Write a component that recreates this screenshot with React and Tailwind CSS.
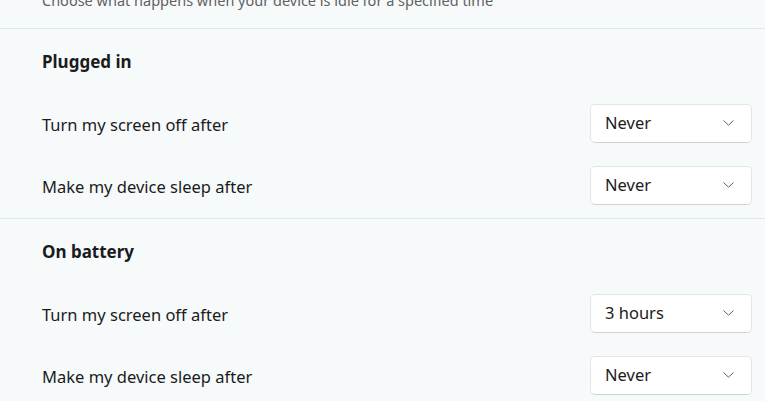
import React from 'react';

const Dropdown = ({ value }) => (
  <div className="mb-[4px] flex h-[39px] w-[162px] items-center justify-between rounded-[5px] border border-[#e3e5e7] border-b-[#cfd1d3] bg-white pl-[14px] pr-[17px] text-[16.5px] text-[#1b1b1b]">
    <span>{value}</span>
    <svg width="11" height="6" viewBox="0 0 11 6" fill="none">
      <path d="M0.5 0.5 L5.5 5.2 L10.5 0.5" stroke="#5f5f5f" strokeWidth="1" />
    </svg>
  </div>
);

const Row = ({ label, value }) => (
  <div className="flex h-[62px] items-center justify-between pl-[42px] pr-[13px]">
    <span className="text-[16.5px] text-[#1b1b1b]">{label}</span>
    <Dropdown value={value} />
  </div>
);

const Section = ({ title, rows }) => (
  <div className="border-t border-[#e1e8ea]">
    <div className="pl-[42px] pt-[16px] pb-[15px] text-[17px] leading-[34px] font-bold text-[#1b1b1b]">{title}</div>
    {rows.map((r) => (
      <Row key={r.label} label={r.label} value={r.value} />
    ))}
  </div>
);

export default function App() {
  return (
    <div className="h-[401px] w-[765px] overflow-hidden bg-[#f7fafb] font-['Noto_Sans',sans-serif]">
      <div className="h-[28px] overflow-hidden">
        <p className="-mt-[10px] pl-[42px] text-[14.5px] leading-[20px] text-[#616161]">
          Choose what happens when your device is idle for a specified time
        </p>
      </div>
      <Section
        title="Plugged in"
        rows={[
          { label: 'Turn my screen off after', value: 'Never' },
          { label: 'Make my device sleep after', value: 'Never' },
        ]}
      />
      <Section
        title="On battery"
        rows={[
          { label: 'Turn my screen off after', value: '3 hours' },
          { label: 'Make my device sleep after', value: 'Never' },
        ]}
      />
    </div>
  );
}
